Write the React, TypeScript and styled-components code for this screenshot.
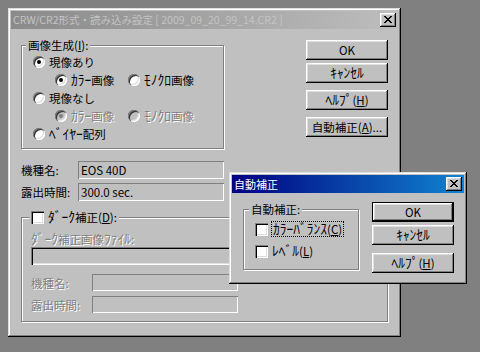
import React from "react";
import styled, { createGlobalStyle } from "styled-components";

const GlobalStyle = createGlobalStyle`
  html, body {
    margin: 0;
    padding: 0;
    background: #808080;
  }
  body {
    font-family: "Noto Sans CJK JP", "Liberation Sans", sans-serif;
    font-size: 11.5px;
    line-height: 14px;
    color: #000;
  }
  * {
    box-sizing: border-box;
  }
`;

const Desktop = styled.div`
  position: relative;
  width: 480px;
  height: 352px;
  background: #808080;
  overflow: hidden;
`;

interface IWindowProps {
  $x: number;
  $y: number;
  $w: number;
  $h: number;
}

const Window = styled.div<IWindowProps>`
  position: absolute;
  left: ${(p) => p.$x}px;
  top: ${(p) => p.$y}px;
  width: ${(p) => p.$w}px;
  height: ${(p) => p.$h}px;
  padding: 3px;
  background: #c0c0c0;
  box-shadow: inset -1px -1px 0 #000, inset 1px 1px 0 #dfdfdf,
    inset -2px -2px 0 #808080, inset 2px 2px 0 #fff;
  display: flex;
  flex-direction: column;
`;

const TitleBar = styled.div<{ $active?: boolean }>`
  height: 18px;
  flex-shrink: 0;
  display: flex;
  align-items: center;
  justify-content: space-between;
  padding: 0 2px 0 2px;
  background: ${(p) =>
    p.$active
      ? "linear-gradient(90deg, #000080, #1084d0)"
      : "linear-gradient(90deg, #8a8a8a, #bdbdbd)"};
  color: ${(p) => (p.$active ? "#fff" : "#c4c4c4")};
`;

const TitleText = styled.span<{ $size?: number }>`
  font-size: ${(p) => p.$size ?? 11}px;
  white-space: nowrap;
  overflow: hidden;
`;

const CloseButton = styled.div`
  width: 16px;
  height: 14px;
  flex-shrink: 0;
  display: flex;
  align-items: center;
  justify-content: center;
  background: #c0c0c0;
  box-shadow: inset -1px -1px 0 #000, inset 1px 1px 0 #fff,
    inset -2px -2px 0 #808080, inset 2px 2px 0 #dfdfdf;
  padding: 0 1px 1px 0;
`;

const Body = styled.div<{ $pad: string }>`
  flex: 1;
  display: flex;
  flex-direction: column;
  padding: ${(p) => p.$pad};
`;

const Row = styled.div<{ $mt?: number }>`
  display: flex;
  justify-content: space-between;
  align-items: flex-start;
  margin-top: ${(p) => p.$mt ?? 0}px;
`;

const Column = styled.div<{ $w: number; $mt?: number }>`
  width: ${(p) => p.$w}px;
  flex-shrink: 0;
  display: flex;
  flex-direction: column;
  margin-top: ${(p) => p.$mt ?? 0}px;
`;

const GroupBox = styled.div<{ $mt?: number; $pad: string; $w?: number }>`
  position: relative;
  width: ${(p) => (p.$w ? `${p.$w}px` : "auto")};
  flex-shrink: 0;
  margin-top: ${(p) => p.$mt ?? 0}px;
  border: 1px solid #808080;
  box-shadow: inset 1px 1px 0 #fff, 1px 1px 0 #fff;
  padding: ${(p) => p.$pad};
  display: flex;
  flex-direction: column;
`;

const Legend = styled.div<{ $left: number }>`
  position: absolute;
  top: -8px;
  left: ${(p) => p.$left}px;
  height: 14px;
  padding: 0 2px;
  background: #c0c0c0;
  display: flex;
  align-items: center;
  gap: 4px;
  white-space: nowrap;
`;

const OptionRow = styled.div<{ $indent?: number; $mt?: number }>`
  height: 18px;
  margin-top: ${(p) => p.$mt ?? 0}px;
  padding-left: ${(p) => p.$indent ?? 0}px;
  display: flex;
  align-items: center;
`;

const Option = styled.label<{ $w?: number }>`
  display: flex;
  align-items: center;
  gap: 4px;
  width: ${(p) => (p.$w ? `${p.$w}px` : "auto")};
  white-space: nowrap;
`;

const RadioCircle = styled.span<{ $disabled?: boolean }>`
  width: 12px;
  height: 12px;
  flex-shrink: 0;
  border-radius: 50%;
  background: ${(p) => (p.$disabled ? "#c0c0c0" : "#fff")};
  box-shadow: inset 1px 1px 0 #808080, inset 2px 2px 0 #303030,
    inset -1px -1px 0 #fff, inset -2px -2px 0 #dfdfdf;
  display: flex;
  align-items: center;
  justify-content: center;
`;

const RadioDot = styled.span<{ $disabled?: boolean }>`
  width: 4px;
  height: 4px;
  border-radius: 50%;
  background: ${(p) => (p.$disabled ? "#808080" : "#000")};
`;

const CheckBox = styled.span`
  width: 13px;
  height: 13px;
  flex-shrink: 0;
  background: #fff;
  box-shadow: inset 1px 1px 0 #808080, inset 2px 2px 0 #000,
    inset -1px -1px 0 #fff, inset -2px -2px 0 #dfdfdf;
`;

const Text = styled.span<{ $disabled?: boolean; $focus?: boolean }>`
  color: ${(p) => (p.$disabled ? "#808080" : "#000")};
  text-shadow: ${(p) => (p.$disabled ? "1px 1px 0 #fff" : "none")};
  outline: ${(p) => (p.$focus ? "1px dotted #000" : "none")};
  padding: ${(p) => (p.$focus ? "0 1px" : "0")};
  white-space: nowrap;
`;

// half-width katakana runs are drawn a little larger, as the old UI font did
const KanaRun = styled.span`
  font-size: 13.5px;
  line-height: 1;
`;

const U = styled.span`
  text-decoration: underline;
`;

const FieldRow = styled.div<{ $mt?: number }>`
  display: flex;
  align-items: center;
  margin-top: ${(p) => p.$mt ?? 0}px;
`;

const FieldLabel = styled.span<{ $w: number; $disabled?: boolean }>`
  width: ${(p) => p.$w}px;
  flex-shrink: 0;
  white-space: nowrap;
  color: ${(p) => (p.$disabled ? "#808080" : "#000")};
  text-shadow: ${(p) => (p.$disabled ? "1px 1px 0 #fff" : "none")};
`;

const Field = styled.div<{ $w?: number; $h?: number; $deep?: boolean }>`
  width: ${(p) => (p.$w ? `${p.$w}px` : "100%")};
  height: ${(p) => p.$h ?? 18}px;
  background: #c0c0c0;
  padding: 0 3px;
  display: flex;
  align-items: center;
  white-space: nowrap;
  box-shadow: ${(p) =>
    p.$deep
      ? "inset 1px 1px 0 #808080, inset 2px 2px 0 #000, inset -1px -1px 0 #fff, inset -2px -2px 0 #dfdfdf"
      : "inset 1px 1px 0 #808080, inset -1px -1px 0 #fff"};
`;

const Button = styled.div<{ $default?: boolean; $mt?: number }>`
  width: 82px;
  height: 20px;
  margin-top: ${(p) => p.$mt ?? 0}px;
  background: #c0c0c0;
  display: flex;
  align-items: center;
  justify-content: center;
  white-space: nowrap;
  padding-bottom: 1px;
  box-shadow: ${(p) =>
    p.$default
      ? "inset 0 0 0 1px #000, inset -2px -2px 0 #000, inset 2px 2px 0 #fff, inset -3px -3px 0 #808080, inset 3px 3px 0 #dfdfdf"
      : "inset -1px -1px 0 #000, inset 1px 1px 0 #fff, inset -2px -2px 0 #808080, inset 2px 2px 0 #dfdfdf"};
`;

function K({ t }: { t: string }) {
  const parts = t.split(/([\uFF61-\uFF9F]+)/);
  return (
    <>
      {parts.map((s, i) => (i % 2 ? <KanaRun key={i}>{s}</KanaRun> : s))}
    </>
  );
}

function CloseGlyph() {
  // 8x7 pixel cross, as drawn on the Windows caption button
  const rows = [
    [0, 1, 6, 7],
    [1, 2, 5, 6],
    [2, 3, 4, 5],
    [3, 4],
    [2, 3, 4, 5],
    [1, 2, 5, 6],
    [0, 1, 6, 7],
  ];
  return (
    <svg width="8" height="7" viewBox="0 0 8 7" shapeRendering="crispEdges">
      {rows.map((cols, y) =>
        cols.map((x) => <rect key={`${x}-${y}`} x={x} y={y} width="1" height="1" fill="#000" />)
      )}
    </svg>
  );
}

function Radio({ checked, disabled }: { checked?: boolean; disabled?: boolean }) {
  return <RadioCircle $disabled={disabled}>{checked && <RadioDot $disabled={disabled} />}</RadioCircle>;
}

function App() {
  return (
    <Desktop>
      <GlobalStyle />
      <Window $x={8} $y={8} $w={393} $h={329}>
        <TitleBar>
          <TitleText $size={10.5}>CRW/CR2形式・読み込み設定 [ 2009_09_20_99_14.CR2 ]</TitleText>
          <CloseButton>
            <CloseGlyph />
          </CloseButton>
        </TitleBar>
        <Body $pad="11px 10px 0 10px">
          <Row>
            <Column $w={203}>
              <GroupBox $mt={5} $pad="7px 0 5px 11px">
                <Legend $left={4}>
                  <Text>
                    画像生成(<U>I</U>):
                  </Text>
                </Legend>
                <OptionRow>
                  <Option>
                    <Radio checked />
                    <Text>現像あり</Text>
                  </Option>
                </OptionRow>
                <OptionRow $indent={22}>
                  <Option $w={73}>
                    <Radio checked />
                    <Text>
                      <K t="ｶﾗｰ画像" />
                    </Text>
                  </Option>
                  <Option>
                    <Radio />
                    <Text>
                      <K t="ﾓﾉｸﾛ画像" />
                    </Text>
                  </Option>
                </OptionRow>
                <OptionRow>
                  <Option>
                    <Radio />
                    <Text>現像なし</Text>
                  </Option>
                </OptionRow>
                <OptionRow $indent={22}>
                  <Option $w={73}>
                    <Radio checked disabled />
                    <Text $disabled>
                      <K t="ｶﾗｰ画像" />
                    </Text>
                  </Option>
                  <Option>
                    <Radio disabled />
                    <Text $disabled>
                      <K t="ﾓﾉｸﾛ画像" />
                    </Text>
                  </Option>
                </OptionRow>
                <OptionRow>
                  <Option>
                    <Radio />
                    <Text>
                      <K t="ﾍﾞｲﾔｰ配列" />
                    </Text>
                  </Option>
                </OptionRow>
              </GroupBox>
              <FieldRow $mt={12}>
                <FieldLabel $w={57}>機種名:</FieldLabel>
                <Field $w={146}>EOS 40D</Field>
              </FieldRow>
              <FieldRow $mt={4}>
                <FieldLabel $w={57}>露出時間:</FieldLabel>
                <Field $w={146}>300.0 sec.</Field>
              </FieldRow>
            </Column>
            <Column $w={82}>
              <Button>OK</Button>
              <Button $mt={3}>
                <K t="ｷｬﾝｾﾙ" />
              </Button>
              <Button $mt={7}>
                <K t="ﾍﾙﾌﾟ" />(<U>H</U>)
              </Button>
              <Button $mt={7}>
                自動補正(<U>A</U>)...
              </Button>
            </Column>
          </Row>
          <GroupBox $mt={16} $pad="14px 9px 8px 9px">
            <Legend $left={7}>
              <CheckBox />
              <Text>
                <K t="ﾀﾞｰｸ補正" />(<U>D</U>):
              </Text>
            </Legend>
            <Text $disabled>
              <K t="ﾀﾞｰｸ補正画像ﾌｧｲﾙ:" />
            </Text>
            <FieldRow $mt={1}>
              <Field $deep />
            </FieldRow>
            <FieldRow $mt={9}>
              <FieldLabel $w={61} $disabled>
                機種名:
              </FieldLabel>
              <Field $w={146} $h={17} />
            </FieldRow>
            <FieldRow $mt={5}>
              <FieldLabel $w={61} $disabled>
                露出時間:
              </FieldLabel>
              <Field $w={146} $h={17} />
            </FieldRow>
          </GroupBox>
        </Body>
      </Window>

      <Window $x={229} $y={172} $w={238} $h={112}>
        <TitleBar $active>
          <TitleText>自動補正</TitleText>
          <CloseButton>
            <CloseGlyph />
          </CloseButton>
        </TitleBar>
        <Body $pad="9px 10px 0 11px">
          <Row>
            <GroupBox $mt={7} $w={116} $pad="10px 0 9px 11px">
              <Legend $left={5}>
                <Text>自動補正:</Text>
              </Legend>
              <OptionRow>
                <Option>
                  <CheckBox />
                  <Text $focus>
                    <K t="ｶﾗｰﾊﾞﾗﾝｽ" />(<U>C</U>)
                  </Text>
                </Option>
              </OptionRow>
              <OptionRow $mt={4}>
                <Option>
                  <CheckBox />
                  <Text>
                    <K t="ﾚﾍﾞﾙ" />(<U>L</U>)
                  </Text>
                </Option>
              </OptionRow>
            </GroupBox>
            <Column $w={82}>
              <Button $default>OK</Button>
              <Button $mt={3}>
                <K t="ｷｬﾝｾﾙ" />
              </Button>
              <Button $mt={8}>
                <K t="ﾍﾙﾌﾟ" />(<U>H</U>)
              </Button>
            </Column>
          </Row>
        </Body>
      </Window>
    </Desktop>
  );
}

export default App;
